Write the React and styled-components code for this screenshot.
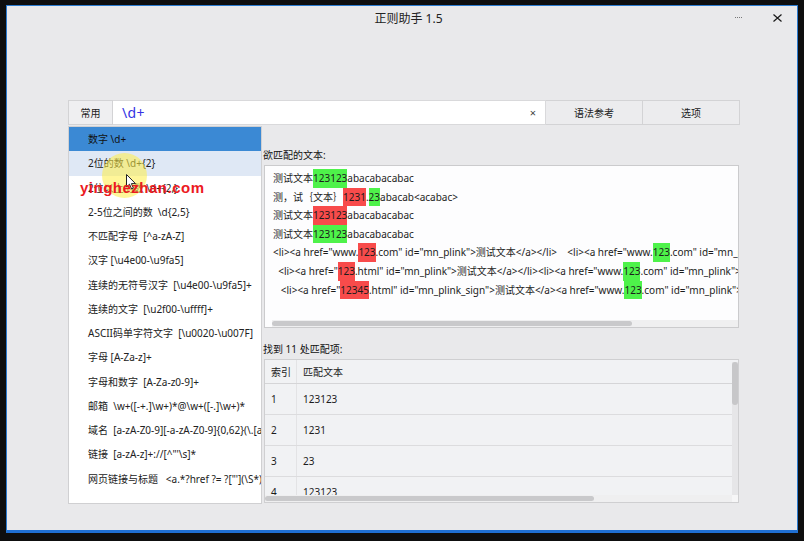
import React from 'react';
import styled, { createGlobalStyle } from 'styled-components';

const Global = createGlobalStyle`
  html, body { margin: 0; padding: 0; background: #0e0e0e; }
  body {
    width: 804px; height: 541px; overflow: hidden;
    font-family: "Noto Sans", "Noto Sans CJK SC", sans-serif;
    font-size: 10px; color: #1a1a1a;
  }
`;

const Screen = styled.div`
  position: relative;
  width: 804px; height: 541px; box-sizing: border-box;
  padding: 5px 6px 8px 6px;
  display: flex;
`;

const Window = styled.div`
  width: 792px; height: 528px; box-sizing: border-box;
  background: #e9e9eb;
  border: 1px solid #2b7bd0;
  border-bottom: 3px solid #1f6fd2;
  display: flex; flex-direction: column;
`;

const TitleBar = styled.div`
  height: 24px; display: flex; align-items: center;
  padding-left: 75px; padding-right: 15px;
`;

const Title = styled.div`
  flex: 1; text-align: center; font-size: 12px; color: #222;
`;

const Controls = styled.div`
  display: flex; align-items: center; gap: 31px;
`;

const MinGlyph = styled.div`
  width: 7px; height: 1px; border-top: 1px dotted #777;
`;

const Body = styled.div`
  flex: 1; display: flex; flex-direction: column; min-width: 0;
  padding: 70px 57px 0 61px;
`;

const Toolbar = styled.div`
  display: flex; height: 25px;
`;

const ToolBtn = styled.div`
  width: ${p => p.$w}px; flex: none; box-sizing: border-box; height: 25px;
  display: flex; align-items: center; justify-content: center;
  background: ${p => (p.$light ? '#efeff1' : '#ececee')};
  border: 1px solid #d3d3d5;
  border-left: ${p => (p.$first ? '1px solid #d3d3d5' : 'none')};
  color: #222;
`;

const InputBox = styled.div`
  flex: 1; box-sizing: border-box; height: 25px;
  background: #fff; border: 1px solid #d9d9db; border-left: none;
  display: flex; align-items: center; padding: 0 9px 0 9px;
`;

const InputText = styled.div`
  flex: 1; font-size: 14px; color: #3434e4; letter-spacing: 0.3px;
`;

const Clear = styled.div`
  font-size: 11px; color: #444;
`;

const Main = styled.div`
  display: flex; margin-top: 1px; min-width: 0;
`;

const List = styled.div`
  flex: none;
  width: 194px; height: 378px; box-sizing: border-box;
  background: #fff; border: 1px solid #d0d0d2;
  overflow: hidden;
`;

const Item = styled.div`
  height: 24.25px; line-height: 24.25px; padding-left: 19px;
  white-space: pre; overflow: hidden;
  background: ${p => (p.$sel ? '#3b89d4' : p.$hover ? '#dfe8f5' : 'transparent')};
  color: ${p => (p.$sel ? '#111' : '#222')};
`;

const Right = styled.div`
  flex: 1; min-width: 0; display: flex; flex-direction: column; padding-top: 21px; margin-left: 1px;
`;

const Label = styled.div`
  line-height: 17px; height: 17px; margin-top: ${p => p.$mt || 0}px; margin-bottom: 1px; color: #111;
`;

const TextBox = styled.div`
  height: 163px; box-sizing: border-box; margin: 0 1px; min-width: 0;
  background: #fdfdfe; border: 1px solid #cbcbcd;
  display: flex; flex-direction: column;
`;

const TextContent = styled.div`
  flex: 1; min-width: 0; overflow: hidden; padding: 3px 0 0 8px;
`;

const Line = styled.div`
  line-height: 18.6px; height: 18.6px; white-space: pre; color: #1c1c1c;
`;

const Mark = styled.span`
  display: inline-block; line-height: 18.6px; height: 18.6px;
  background: ${p => (p.$c === 'g' ? '#4ef24a' : '#f84b4b')};
`;

const HTrack = styled.div`
  flex: ${p => (p.$grow ? 1 : 'none')};
  height: 7px; margin: 0 0 0 ${p => p.$ml}px; display: flex; align-items: center;
  background: #efeff0;
`;

const HThumb = styled.div`
  width: ${p => p.$w}px; height: 5px; border-radius: 3px; background: #c9c9cb;
`;

const Table = styled.div`
  height: 144px; box-sizing: border-box; margin: 0 1px;
  background: #f1f2f4; border: 1px solid #cfcfd1;
  display: flex; flex-direction: column;
`;

const TableMain = styled.div`
  flex: 1; display: flex; overflow: hidden;
`;

const Grid = styled.div`
  flex: 1; overflow: hidden;
`;

const Row = styled.div`
  display: flex; height: ${p => (p.$head ? 23 : 30)}px;
  border-bottom: 1px solid ${p => (p.$head ? '#d5d5d7' : '#dcdcde')};
`;

const Cell = styled.div`
  display: flex; align-items: center; padding-left: 6px; box-sizing: border-box;
  width: ${p => (p.$w ? p.$w + 'px' : 'auto')};
  flex: ${p => (p.$w ? 'none' : 1)};
  border-right: ${p => (p.$w ? '1px solid #e3e3e5' : 'none')};
  color: #1c1c1c;
`;

const VTrack = styled.div`
  width: 6px; margin: 2px 0 0 0; background: #e6e6e8; display: flex; flex-direction: column;
`;

const VThumb = styled.div`
  height: 43px; width: 6px; border-radius: 3px; background: #c7c7c9;
`;

const TableFoot = styled.div`
  height: 7px; display: flex;
`;

const Corner = styled.div`
  width: 6px; background: #f6f6f7;
`;

const Watermark = styled.div`
  position: absolute; left: 80px; top: 180px;
  font-family: "Liberation Sans", Arial, sans-serif; font-weight: bold;
  font-size: 15px; line-height: 15px; letter-spacing: 0.5px; color: #ec1a1f;
`;

const Halo = styled.div`
  position: absolute; left: 102px; top: 153px; width: 45px; height: 45px;
  border-radius: 50%; background: rgba(255, 238, 70, 0.55);
`;

const Cursor = styled.svg`
  position: absolute; left: 126px; top: 174px;
`;

const items = [
  '数字 \\d+',
  '2位的数 \\d+{2}',
  '2位以上的数 \\d+{2,}',
  '2-5位之间的数  \\d{2,5}',
  '不匹配字母  [^a-zA-Z]',
  '汉字 [\\u4e00-\\u9fa5]',
  '连续的无符号汉字  [\\u4e00-\\u9fa5]+',
  '连续的文字  [\\u2f00-\\uffff]+',
  'ASCII码单字符文字  [\\u0020-\\u007F]',
  '字母 [A-Za-z]+',
  '字母和数字  [A-Za-z0-9]+',
  '邮箱  \\w+([-+.]\\w+)*@\\w+([-.]\\w+)*',
  '域名  [a-zA-Z0-9][-a-zA-Z0-9]{0,62}(\\.[a-zA-Z0-9]',
  '链接  [a-zA-z]+://[^"\'\\s]*',
  '网页链接与标题   <a.*?href ?= ?["\'](\\S*)',
];

const lines = [
  [['测试文本'], ['123123', 'g'], ['abacabacabac']],
  [['测，试｛文本｝'], ['1231', 'r'], ['.'], ['23', 'g'], ['abacab<acabac>']],
  [['测试文本'], ['123123', 'r'], ['abacabacabac']],
  [['测试文本'], ['123123', 'g'], ['abacabacabac']],
  [['<li><a href="www.'], ['123', 'r'], ['.com" id="mn_plink">测试文本</a></li>    <li><a href="www.'], ['123', 'g'], ['.com" id="mn_plink">测试文本</a></li>']],
  [['  <li><a href="'], ['123', 'r'], ['.html" id="mn_plink">测试文本</a></li><li><a href="www.'], ['123', 'g'], ['.com" id="mn_plink">测试文本</a></li>']],
  [['   <li><a href="'], ['12345', 'r'], ['.html" id="mn_plink_sign">测试文本</a><a href="www.'], ['123', 'g'], ['.com" id="mn_plink">测试文本</a>']],
];

const matches = ['123123', '1231', '23', '123123', '123123', '123', '123', '123', '123', '12345', '123'];

export default function App() {
  return (
    <Screen>
      <Global />
      <Window>
        <TitleBar>
          <Title>正则助手 1.5</Title>
          <Controls>
            <MinGlyph />
            <svg width="9" height="8" viewBox="0 0 9 8">
              <path d="M0.5 0.5 L8.5 7.5 M8.5 0.5 L0.5 7.5" stroke="#1a1a1a" strokeWidth="1.2" fill="none" />
            </svg>
          </Controls>
        </TitleBar>
        <Body>
          <Toolbar>
            <ToolBtn $w={45} $first $light>常用</ToolBtn>
            <InputBox>
              <InputText>\d+</InputText>
              <Clear>×</Clear>
            </InputBox>
            <ToolBtn $w={97}>语法参考</ToolBtn>
            <ToolBtn $w={97}>选项</ToolBtn>
          </Toolbar>
          <Main>
            <List>
              {items.map((t, i) => (
                <Item key={i} $sel={i === 0} $hover={i === 1}>{t}</Item>
              ))}
            </List>
            <Right>
              <Label>欲匹配的文本:</Label>
              <TextBox>
                <TextContent>
                  {lines.map((segs, i) => (
                    <Line key={i}>
                      {segs.map(([t, c], j) =>
                        c ? <Mark key={j} $c={c}>{t}</Mark> : <React.Fragment key={j}>{t}</React.Fragment>
                      )}
                    </Line>
                  ))}
                </TextContent>
                <HTrack $ml={7}>
                  <HThumb $w={360} />
                </HTrack>
              </TextBox>
              <Label $mt={13}>找到 11 处匹配项:</Label>
              <Table>
                <TableMain>
                  <Grid>
                    <Row $head>
                      <Cell $w={32}>索引</Cell>
                      <Cell>匹配文本</Cell>
                    </Row>
                    {matches.map((m, i) => (
                      <Row key={i}>
                        <Cell $w={32}>{i + 1}</Cell>
                        <Cell>{m}</Cell>
                      </Row>
                    ))}
                  </Grid>
                  <VTrack>
                    <VThumb />
                  </VTrack>
                </TableMain>
                <TableFoot>
                  <HTrack $ml={0} $grow>
                    <HThumb $w={329} />
                  </HTrack>
                  <Corner />
                </TableFoot>
              </Table>
            </Right>
          </Main>
        </Body>
      </Window>
      <Halo />
      <Cursor width="11" height="16" viewBox="0 0 11 16">
        <path d="M0.5 0.5 L0.5 13 L3.5 10.2 L5.6 15 L7.4 14.2 L5.4 9.6 L9.5 9.6 Z" fill="#fff" stroke="#222" strokeWidth="1" />
      </Cursor>
      <Watermark>yinghezhan.com</Watermark>
    </Screen>
  );
}
